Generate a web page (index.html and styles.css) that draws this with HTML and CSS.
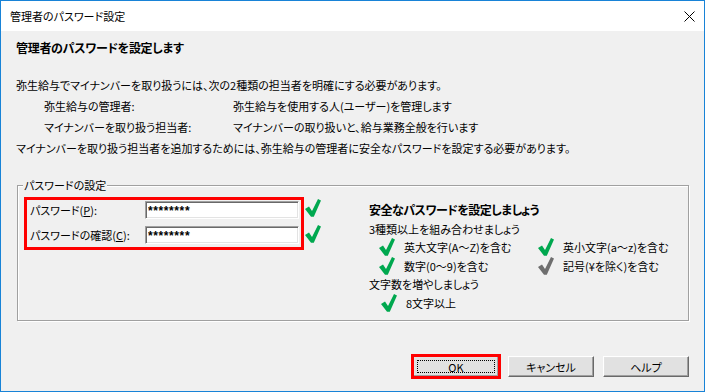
FILE: index.html
```html
<!doctype html>
<html lang="ja">
	<head>
		<meta charset="UTF-8" />
		<title>管理者のパスワード設定</title>
		<link rel="stylesheet" href="styles.css">
	</head>
	<body>
		<div class="window">
			<div class="titlebar">
				<span class="title">管理者のパスワード設定</span>
				<svg class="close" width="11" height="11" viewBox="0 0 11 11">
					<path d="M0.5 0.5 L10.5 10.5 M10.5 0.5 L0.5 10.5" stroke="#000" stroke-width="1" fill="none" />
				</svg>
			</div>
			<div class="body">
				<h1>管理者のパスワードを設定します</h1>
				<div class="intro">
					<p>弥生給与でマイナンバーを取り扱うには、次の2種類の担当者を明確にする必要があります。</p>
					<div class="role">
						<span>弥生給与の管理者:</span>
						<span>弥生給与を使用する人(ユーザー)を管理します</span>
					</div>
					<div class="role">
						<span>マイナンバーを取り扱う担当者:</span>
						<span>マイナンバーの取り扱いと、給与業務全般を行います</span>
					</div>
					<p>マイナンバーを取り扱う担当者を追加するためには、弥生給与の管理者に安全なパスワードを設定する必要があります。</p>
				</div>

				<div class="group">
					<span class="group-title">パスワードの設定</span>
					<div class="group-inner">
						<div class="fields">
							<div class="field-box">
								<div class="field">
									<label for="pw">パスワード(<u>P</u>):</label>
									<input type="text" id="pw" value="********" />
								</div>
								<div class="field">
									<label for="pw2">パスワードの確認(<u>C</u>):</label>
									<input type="text" id="pw2" value="********" />
								</div>
							</div>
							<div class="field-checks">
								<svg class="check" viewBox="0 0 16 18"><path d="M0 10 L4 7.5 L7 12 L13 0 L16 1.5 L8.8 17.8 L6 17.8 Z" /></svg>
								<svg class="check" viewBox="0 0 16 18"><path d="M0 10 L4 7.5 L7 12 L13 0 L16 1.5 L8.8 17.8 L6 17.8 Z" /></svg>
							</div>
						</div>

						<div class="tips">
							<div class="tips-head">安全なパスワードを設定しましょう</div>
							<div>3種類以上を組み合わせましょう</div>
							<div class="rules">
								<div class="rule"><svg class="check" viewBox="0 0 16 18"><path d="M0 10 L4 7.5 L7 12 L13 0 L16 1.5 L8.8 17.8 L6 17.8 Z" /></svg>英大文字(A～Z)を含む</div>
								<div class="rule"><svg class="check" viewBox="0 0 16 18"><path d="M0 10 L4 7.5 L7 12 L13 0 L16 1.5 L8.8 17.8 L6 17.8 Z" /></svg>英小文字(a～z)を含む</div>
								<div class="rule"><svg class="check" viewBox="0 0 16 18"><path d="M0 10 L4 7.5 L7 12 L13 0 L16 1.5 L8.8 17.8 L6 17.8 Z" /></svg>数字(0～9)を含む</div>
								<div class="rule"><svg class="check off" viewBox="0 0 16 18"><path d="M0 10 L4 7.5 L7 12 L13 0 L16 1.5 L8.8 17.8 L6 17.8 Z" /></svg>記号(¥を除く)を含む</div>
							</div>
							<div>文字数を増やしましょう</div>
							<div class="rules single">
								<div class="rule"><svg class="check" viewBox="0 0 16 18"><path d="M0 10 L4 7.5 L7 12 L13 0 L16 1.5 L8.8 17.8 L6 17.8 Z" /></svg>8文字以上</div>
							</div>
						</div>
					</div>
				</div>

				<div class="buttons">
					<button class="btn default"><span class="focus">OK</span></button>
					<button class="btn">キャンセル</button>
					<button class="btn">ヘルプ</button>
				</div>
			</div>
		</div>
	</body>
</html>
```

FILE: styles.css
```css
:root {
	--frame: #1883d7;
	--face: #f0f0f0;
	--text: #000;
	--line: #a0a0a0;
	--ok: #00a84f;
	--mark: #ff0000;
}

* {
	box-sizing: border-box;
}

body {
	margin: 0;
	font-family: 'Noto Sans CJK JP', sans-serif;
	font-size: 11px;
	font-feature-settings: 'palt';
	color: var(--text);
}

.window {
	width: 705px;
	height: 392px;
	border: 1px solid var(--frame);
	display: flex;
	flex-direction: column;
	background-color: var(--face);
}

.titlebar {
	height: 30px;
	flex: none;
	background-color: #fff;
	display: flex;
	align-items: center;
	justify-content: space-between;
	padding: 0 9px 0 9px;
}

.close {
	margin-top: 1px;
}

.body {
	flex: 1;
	padding: 7px 15px 0 15px;
}

h1 {
	margin: 0;
	font-size: 12px;
	font-weight: bold;
	letter-spacing: -0.3px;
	line-height: 20px;
}

.intro {
	margin-top: 17px;
	line-height: 21px;
}

.intro p {
	margin: 0;
}

.role {
	display: grid;
	grid-template-columns: 189px 1fr;
	padding-left: 28px;
}

/* グループボックス */
.group {
	position: relative;
	margin: 26px 0 0 1px;
	height: 136px;
	border: 1px solid var(--line);
	box-shadow: inset 1px 1px 0 #fff, 1px 1px 0 #fff;
}

.group-title {
	position: absolute;
	left: 5px;
	top: -10px;
	padding: 0 1px;
	line-height: 18px;
	background-color: var(--face);
}

.group-inner {
	display: flex;
	padding: 11px 0 0 6px;
}

.fields {
	display: flex;
	width: 345px;
}

.field-box {
	width: 280px;
	height: 53px;
	border: 3px solid var(--mark);
	padding: 1px 2px 0 3px;
	display: flex;
	flex-direction: column;
	gap: 7px;
}

.field {
	display: flex;
	align-items: center;
	justify-content: space-between;
	height: 18px;
}

.field input {
	width: 154px;
	height: 18px;
	padding: 2px 2px 0 2px;
	font-family: 'Liberation Sans', sans-serif;
	font-size: 12px;
	font-weight: bold;
	letter-spacing: 0.6px;
	background-color: #fff;
	border: 1px solid;
	border-color: #a0a0a0 #fff #fff #a0a0a0;
	box-shadow: inset 1px 1px 0 #696969, inset -1px -1px 0 #e3e3e3;
	outline: none;
}

.field-checks {
	display: flex;
	flex-direction: column;
	gap: 8px;
	padding: 2px 0 0 1px;
}

.check {
	width: 16px;
	height: 18px;
	fill: var(--ok);
	flex: none;
}

.check.off {
	fill: #6e6e6e;
}

.tips {
	margin-top: 4px;
	line-height: 18.5px;
}

.tips-head {
	font-size: 12px;
	font-weight: bold;
	letter-spacing: -0.5px;
}

.rules {
	display: grid;
	grid-template-columns: 159px 1fr;
	padding-left: 10px;
}

.rules.single {
	padding-left: 12px;
}

.rule {
	display: flex;
	align-items: center;
	gap: 9px;
}

/* ボタン */
.buttons {
	display: flex;
	justify-content: flex-end;
	gap: 9px;
	margin-top: 35px;
}

.btn {
	width: 86px;
	height: 21px;
	padding: 0;
	font-family: 'Noto Sans CJK JP', sans-serif;
	font-size: 11px;
	font-feature-settings: 'palt';
	color: var(--text);
	background-color: #e1e1e1;
	border: 1px solid;
	border-color: #fff #696969 #696969 #fff;
	box-shadow: inset -1px -1px 0 #a0a0a0, inset 1px 1px 0 #e3e3e3;
	display: flex;
	align-items: center;
	justify-content: center;
}

.btn.default {
	outline: 3px solid var(--mark);
	outline-offset: -1px;
}

.focus {
	width: 78px;
	height: 13px;
	line-height: 12px;
	border: 1px dotted #000;
	display: flex;
	align-items: center;
	justify-content: center;
}
```
